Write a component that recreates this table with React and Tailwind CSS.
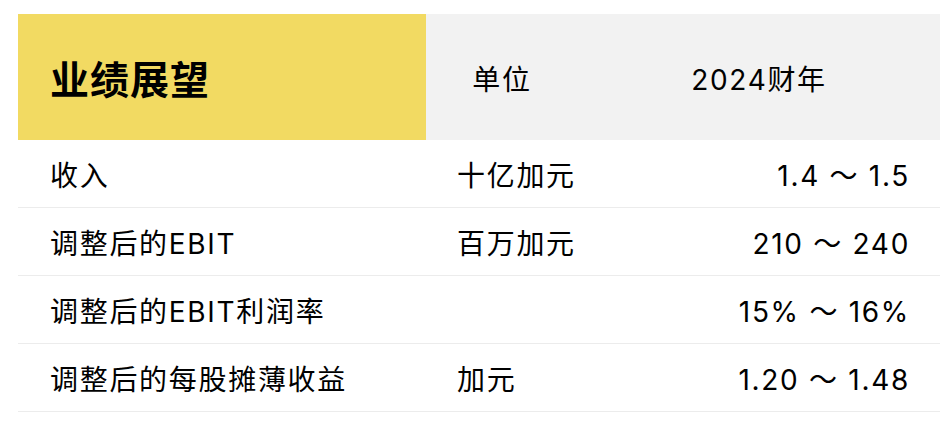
import React from "react";

const rows = [
  { label: "收入", unit: "十亿加元", value: "1.4 ～ 1.5" },
  { label: "调整后的EBIT", unit: "百万加元", value: "210 ～ 240" },
  { label: "调整后的EBIT利润率", unit: "", value: "15% ～ 16%" },
  { label: "调整后的每股摊薄收益", unit: "加元", value: "1.20 ～ 1.48" },
];

export default function App() {
  return (
    <div
      className="w-[940px] h-[426px] bg-white pt-[14px] pl-[18px] text-black overflow-hidden"
      style={{ fontFamily: 'Inter, "Noto Sans CJK SC", sans-serif' }}
    >
      <div className="w-[922px]">
        <div className="flex h-[126px]">
          <div className="w-[408px] bg-[#f2da62] flex items-center pl-[32px] pt-[4px]">
            <span className="text-[39px] font-bold tracking-[1px] leading-none">业绩展望</span>
          </div>
          <div className="flex-1 bg-[#f2f2f2] flex items-center pt-[5px]">
            <div className="w-[152px] text-center text-[28px] tracking-[1.7px] leading-none">单位</div>
            <div className="flex-1 text-center text-[28px] tracking-[1.7px] leading-none">2024财年</div>
          </div>
        </div>
        {rows.map((r) => (
          <div key={r.label} className="flex h-[68px] items-center pt-[4px] border-b border-[#ececec] text-[28px] tracking-[1.7px] leading-none">
            <div className="w-[408px] pl-[32px]">{r.label}</div>
            <div className="w-[152px] pl-[31px]">{r.unit}</div>
            <div className="flex-1 text-right pr-[30px]">{r.value}</div>
          </div>
        ))}
      </div>
    </div>
  );
}
